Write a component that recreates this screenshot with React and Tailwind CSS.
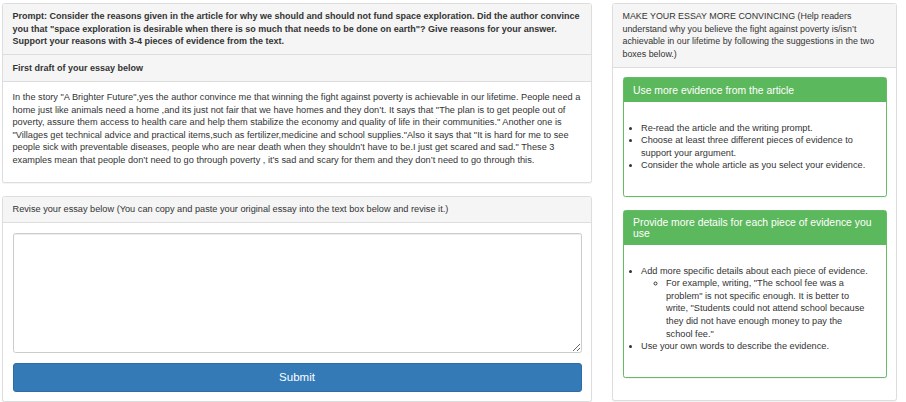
import React, { useState } from 'react';

// 修改建议列表
const evidenceTips = [
  'Re-read the article and the writing prompt.',
  'Choose at least three different pieces of evidence to support your argument.',
  'Consider the whole article as you select your evidence.',
];

const draftText =
  'In the story "A Brighter Future",yes the author convince me that winning the fight against poverty is achievable in our lifetime. People need a home just like animals need a home ,and its just not fair that we have homes and they don\u2019t. It says that "The plan is to get people out of poverty, assure them access to health care and help them stabilize the economy and quality of life in their communities." Another one is "Villages get technical advice and practical items,such as fertilizer,medicine and school supplies."Also it says that "It is hard for me to see people sick with preventable diseases, people who are near death when they shouldn\u2019t have to be.I just get scared and sad." These 3 examples mean that people don\u2019t need to go through poverty , it\u2019s sad and scary for them and they don\u2019t need to go through this.';

function TipBox({ title, children }) {
  return (
    <div className="border border-[#66bc66] rounded-[2.5px] bg-white shadow-[0_1px_1px_rgba(0,0,0,0.05)]">
      <div className="bg-[#5cb85c] text-white text-[10.4px] leading-[11px] px-[9.5px] py-[6.3px]">
        {title}
      </div>
      <div className="px-[9.5px] pt-[19.5px] pb-[24px]">{children}</div>
    </div>
  );
}

export default function App() {
  const [essay, setEssay] = useState('');

  return (
    <div className="min-h-screen bg-white font-['Liberation_Sans',Arial,sans-serif] text-[#333] text-[9.2px] leading-[12.6px] pl-[2px] pt-[3px] flex gap-[20px]">
      {/* 左栏：题目、初稿、修改区 */}
      <div className="w-[590px] flex flex-col gap-[12.6px]">
        <div className="border border-[#ddd] rounded-[2.5px] bg-white shadow-[0_1px_1px_rgba(0,0,0,0.05)]">
          <div className="bg-[#f5f5f5] border-b border-[#ddd] px-[9.5px] py-[6.3px] font-bold text-[9px]">
            Prompt: Consider the reasons given in the article for why we should and should not fund space exploration. Did the author convince you that "space exploration is desirable when there is so much that needs to be done on earth"? Give reasons for your answer. Support your reasons with 3-4 pieces of evidence from the text.
          </div>
          <div className="bg-[#f5f5f5] border-b border-[#ddd] px-[9.5px] py-[6.3px] font-bold text-[9px]">
            First draft of your essay below
          </div>
          <div className="px-[9.5px] pt-[9.5px] pb-[15.8px]">
            <p>{draftText}</p>
          </div>
        </div>

        <div className="border border-[#ddd] rounded-[2.5px] bg-white shadow-[0_1px_1px_rgba(0,0,0,0.05)]">
          <div className="bg-[#f5f5f5] border-b border-[#ddd] px-[9.5px] py-[6.3px]">
            Revise your essay below (You can copy and paste your original essay into the text box below and revise it.)
          </div>
          <div className="p-[9.5px] flex flex-col gap-[10px]">
            <textarea
              value={essay}
              onChange={(e) => setEssay(e.target.value)}
              className="w-full h-[120px] border border-[#ccc] rounded-[2.5px] shadow-[inset_0_1px_1px_rgba(0,0,0,0.075)] outline-none px-[7px] py-[4px]"
            />
            <button className="w-full h-[29px] rounded-[3px] bg-[#337ab7] border border-[#2e6da4] text-white text-[11.5px]">
              Submit
            </button>
          </div>
        </div>
      </div>

      {/* 右栏：写作建议 */}
      <div className="w-[285px]">
        <div className="border border-[#ddd] rounded-[2.5px] bg-white shadow-[0_1px_1px_rgba(0,0,0,0.05)]">
          <div className="bg-[#f5f5f5] border-b border-[#ddd] px-[9.5px] py-[6.3px] text-[8.9px]">
            MAKE YOUR ESSAY MORE CONVINCING (Help readers understand why you believe the fight against poverty is/isn’t achievable in our lifetime by following the suggestions in the two boxes below.)
          </div>
          <div className="px-[9.5px] pt-[9.5px] pb-[22px] flex flex-col gap-[12.6px]">
            <TipBox title="Use more evidence from the article">
              <ul className="list-disc pl-[8px]">
                {evidenceTips.map((tip) => (
                  <li key={tip}>{tip}</li>
                ))}
              </ul>
            </TipBox>
            <TipBox title="Provide more details for each piece of evidence you use">
              <ul className="list-disc pl-[8px]">
                <li>
                  Add more specific details about each piece of evidence.
                  <ul className="list-[circle] pl-[25px] pr-[10px]">
                    <li>
                      For example, writing, "The school fee was a problem" is not specific enough. It is better to write, "Students could not attend school because they did not have enough money to pay the school fee."
                    </li>
                  </ul>
                </li>
                <li>Use your own words to describe the evidence.</li>
              </ul>
            </TipBox>
          </div>
        </div>
      </div>
    </div>
  );
}
